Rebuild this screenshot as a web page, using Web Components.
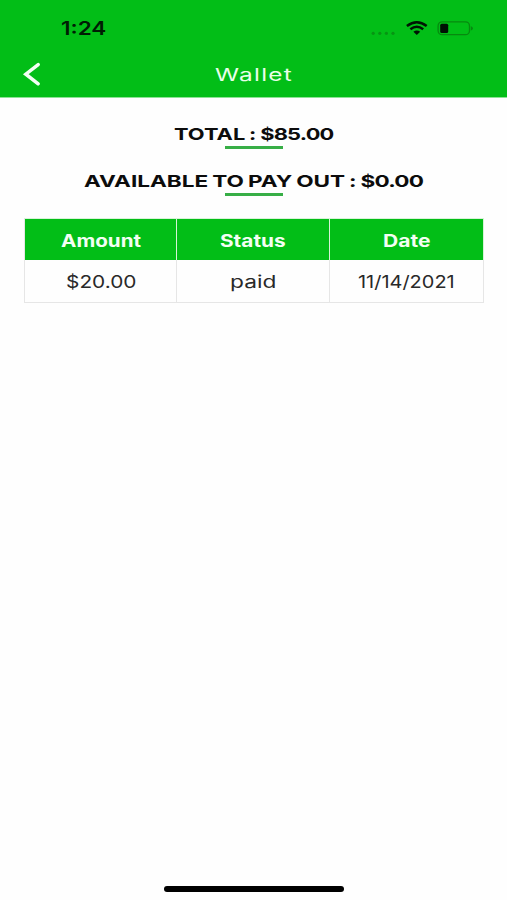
<!DOCTYPE html>
<html lang="en">
<head>
<meta charset="utf-8">
<title>Wallet</title>
<style>
html,body{margin:0;height:100%;background:#fefefe}
body{font-family:Inter,"Liberation Sans",sans-serif;overflow:hidden}
.sum{letter-spacing:-.6px}
</style>
</head>
<body>
<wallet-app></wallet-app>
<script>
const define = (name, html, setup) => customElements.define(name, class extends HTMLElement {
  connectedCallback() {
    if (this.shadowRoot) return;
    const t = document.createElement('template');
    t.innerHTML = html;
    this.attachShadow({mode: 'open'}).append(t.content.cloneNode(true));
    if (setup) setup(this, this.shadowRoot);
  }
});

// Text stretched horizontally to the width given in its attribute
define('wide-text', `<style>
:host{display:block;flex:none;white-space:nowrap;line-height:20px;height:20px}
span{display:inline-block;transform-origin:0 50%}
</style><span><slot></slot></span>`, (el, root) => {
  const w = +el.getAttribute('width');
  const s = root.querySelector('span');
  el.style.width = w + 'px';
  s.style.transform = `scaleX(${w / s.offsetWidth})`;
});

define('status-bar', `<style>
:host{display:flex;height:50px;box-sizing:border-box;padding:19px 33px 0 61px;justify-content:space-between;align-items:flex-start;color:#001d04}
wide-text{font-size:18px;font-weight:600}
svg{display:block}
</style>
<wide-text width="45">1:24</wide-text>
<svg width="103" height="20" viewBox="0 0 103 20">
<g fill="#079413"><circle cx="2.2" cy="14.3" r="1.6"/><circle cx="8.8" cy="14.3" r="1.6"/><circle cx="15.4" cy="14.3" r="1.6"/><circle cx="22" cy="14.3" r="1.6"/></g>
<g fill="none" stroke="#001404" stroke-width="2.5"><path d="M35.9 7.1Q45.8 -.6 55.7 7.1"/><path d="M39.4 10.3Q45.8 5.2 52.2 10.3"/></g>
<path fill="#001404" d="M42.4 12.8Q45.8 10.2 49.2 12.8L45.8 15.9Z"/>
<rect x="67.1" y="2.9" width="31.4" height="12.8" rx="4" fill="none" stroke="#07890f" stroke-width="1.3"/>
<path fill="#07890f" d="M99.9 7.2Q101.9 7.8 101.9 9.4T99.9 11.6Z"/>
<rect x="69.2" y="4.8" width="8" height="9.2" rx="1.5" fill="#001004"/>
</svg>`);

define('nav-bar', `<style>
:host{display:grid;grid-template-columns:1fr auto 1fr;height:49px;align-items:center;color:#e9ffe9}
svg{display:block;margin:-2px 0 0 22px}
wide-text{font-size:17.5px;letter-spacing:.9px}
</style>
<svg width="20" height="26" viewBox="0 0 20 26"><path d="M16.2 3.6L3.8 13.2L16.2 22.8" fill="none" stroke="#f4fff4" stroke-width="3.5" stroke-linecap="round"/></svg>
<wide-text width="78"><slot></slot></wide-text>`);

define('balance-line', `<style>
:host{display:flex;flex-direction:column;align-items:center;height:47px;color:#0c0c0c;font-size:16.5px;font-weight:700;word-spacing:-1px;font-feature-settings:"calt" 0}
i{width:58.5px;height:2.4px;background:#37ae46;margin:2.2px 0 0 1px}
</style><slot></slot><i></i>`);

define('table-cell', `<style>
:host{display:flex;align-items:center;justify-content:center;box-sizing:border-box;padding-top:2px;font-size:17.3px;color:#292929;border-right:1.5px solid #e6e6e6;border-bottom:1px solid #e6e6e6}
:host([head]){background:#02be17;color:#f3fff3;font-size:17px;font-weight:700;border-color:#d6f3d6;border-bottom:0}
</style><slot></slot>`);

define('payout-table', `<style>
:host{display:grid;grid-template-columns:152px 153px 154px;grid-template-rows:41px 43px;margin:0 23px 0 24px;border-left:1px solid #e6e6e6;border-top:1px solid #d8f3d8}
</style><slot></slot>`);

define('wallet-app', `<style>
:host{display:flex;flex-direction:column;width:507px;height:900px;background:#fefefe}
header{background:#02be17;height:98px;box-sizing:border-box;border-bottom:1px solid #8de295}
main{flex:1}
.balances{box-sizing:border-box;padding-top:26px;height:120px}
.sum{letter-spacing:-.6px}
footer{height:14px;display:flex;justify-content:center;align-items:flex-start}
footer i{width:180px;height:5.5px;border-radius:3px;background:#000}
</style>
<header><status-bar></status-bar><nav-bar>Wallet</nav-bar></header>
<main>
<div class="balances">
<balance-line><wide-text width="160">TOTAL : <span class="sum">$85.00</span></wide-text></balance-line>
<balance-line><wide-text width="339">AVAILABLE TO PAY OUT : <span class="sum">$0.00</span></wide-text></balance-line>
</div>
<payout-table>
<table-cell head><wide-text width="80">Amount</wide-text></table-cell>
<table-cell head><wide-text width="66">Status</wide-text></table-cell>
<table-cell head><wide-text width="47">Date</wide-text></table-cell>
<table-cell><wide-text width="70">$20.00</wide-text></table-cell>
<table-cell><wide-text width="46">paid</wide-text></table-cell>
<table-cell><wide-text width="97">11/14/2021</wide-text></table-cell>
</payout-table>
</main>
<footer><i></i></footer>`);
</script>
</body>
</html>
